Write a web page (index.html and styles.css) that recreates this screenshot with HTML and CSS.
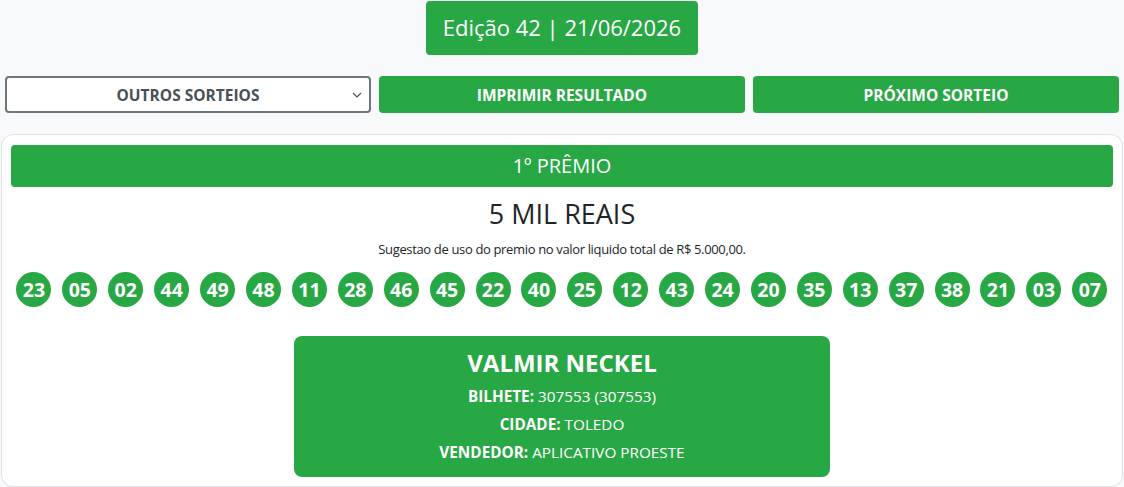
FILE: index.html
```html
<!DOCTYPE html>
<html lang="pt-BR">
<head>
  <meta charset="UTF-8" />
  <meta name="viewport" content="width=device-width, initial-scale=1.0"/>
  <title>Resultado do Sorteio</title>
  <link rel="stylesheet" href="styles.css">
</head>
<body>
  <div class="topo">
    <div class="edicao">Edição 42 | 21/06/2026</div>
  </div>

  <div class="acoes">
    <select class="sorteios">
      <option>OUTROS SORTEIOS</option>
    </select>
    <button class="btn">IMPRIMIR RESULTADO</button>
    <button class="btn">PRÓXIMO SORTEIO</button>
  </div>

  <div class="card">
    <div class="premio">1º PRÊMIO</div>
    <div class="valor">5 MIL REAIS</div>
    <div class="sugestao">Sugestao de uso do premio no valor liquido total de R$ 5.000,00.</div>

    <div class="bolas">
      <span>23</span><span>05</span><span>02</span><span>44</span><span>49</span><span>48</span>
      <span>11</span><span>28</span><span>46</span><span>45</span><span>22</span><span>40</span>
      <span>25</span><span>12</span><span>43</span><span>24</span><span>20</span><span>35</span>
      <span>13</span><span>37</span><span>38</span><span>21</span><span>03</span><span>07</span>
    </div>

    <div class="ganhador">
      <div class="nome">VALMIR NECKEL</div>
      <div class="info"><b>BILHETE:</b> 307553 (307553)</div>
      <div class="info"><b>CIDADE:</b> TOLEDO</div>
      <div class="info"><b>VENDEDOR:</b> APLICATIVO PROESTE</div>
    </div>
  </div>
</body>
</html>
```

FILE: styles.css
```css
body {
  background: #f8f9fa;
  color: #212529;
  font-family: 'Open Sans', 'Noto Sans', sans-serif;
  margin: 0;
  padding: 1px 0 0;
}

.topo {
  display: flex;
  justify-content: center;
}

.edicao {
  background: #28a745;
  color: #fff;
  font-size: 22px;
  line-height: 33px;
  padding: 10px 17px 11px;
  border-radius: 4px;
}

.acoes {
  display: grid;
  grid-template-columns: 1fr 1fr 1fr;
  gap: 8px;
  padding: 0 5px;
  margin-top: 21px;
}

.sorteios,
.btn {
  height: 37px;
  font-family: inherit;
  font-size: 15.5px;
  font-weight: bold;
  border-radius: 4px;
}

.sorteios {
  appearance: none;
  background: #fff url("data:image/svg+xml,%3Csvg xmlns='http://www.w3.org/2000/svg' width='10' height='6' viewBox='0 0 10 6'%3E%3Cpath d='M1 1l4 4 4-4' fill='none' stroke='%23495057' stroke-width='1.2'/%3E%3C/svg%3E") no-repeat right 7px center;
  border: 2px solid #6c757d;
  color: #495057;
  text-align: center;
  text-align-last: center;
}

.btn {
  background: #28a745;
  border: none;
  color: #fff;
  cursor: pointer;
}

.card {
  background: #fff;
  border: 1px solid #dee2e6;
  border-radius: 12px;
  margin: 21px 1px 0;
  padding: 10px 9px 9px;
  text-align: center;
}

.premio {
  background: #28a745;
  color: #fff;
  font-size: 20px;
  line-height: 42px;
  border-radius: 4px;
}

.valor {
  font-size: 27px;
  line-height: 38px;
  margin-top: 8px;
}

.sugestao {
  font-size: 13px;
  letter-spacing: -0.35px;
  line-height: 20px;
  margin-top: 6px;
}

.bolas {
  display: flex;
  justify-content: space-around;
  margin-top: 13px;
}

.bolas span {
  width: 35px;
  height: 35px;
  border-radius: 50%;
  background: #28a745;
  color: #fff;
  font-size: 19.5px;
  font-weight: bold;
  line-height: 35px;
}

.ganhador {
  width: 536px;
  margin: 29px auto 0;
  background: #28a745;
  color: #fff;
  border-radius: 8px;
  padding: 10px 0 11px;
}

.nome {
  font-size: 24px;
  font-weight: bold;
  line-height: 34px;
  margin-bottom: 2px;
}

.info {
  font-size: 15.3px;
  line-height: 28px;
}
```
